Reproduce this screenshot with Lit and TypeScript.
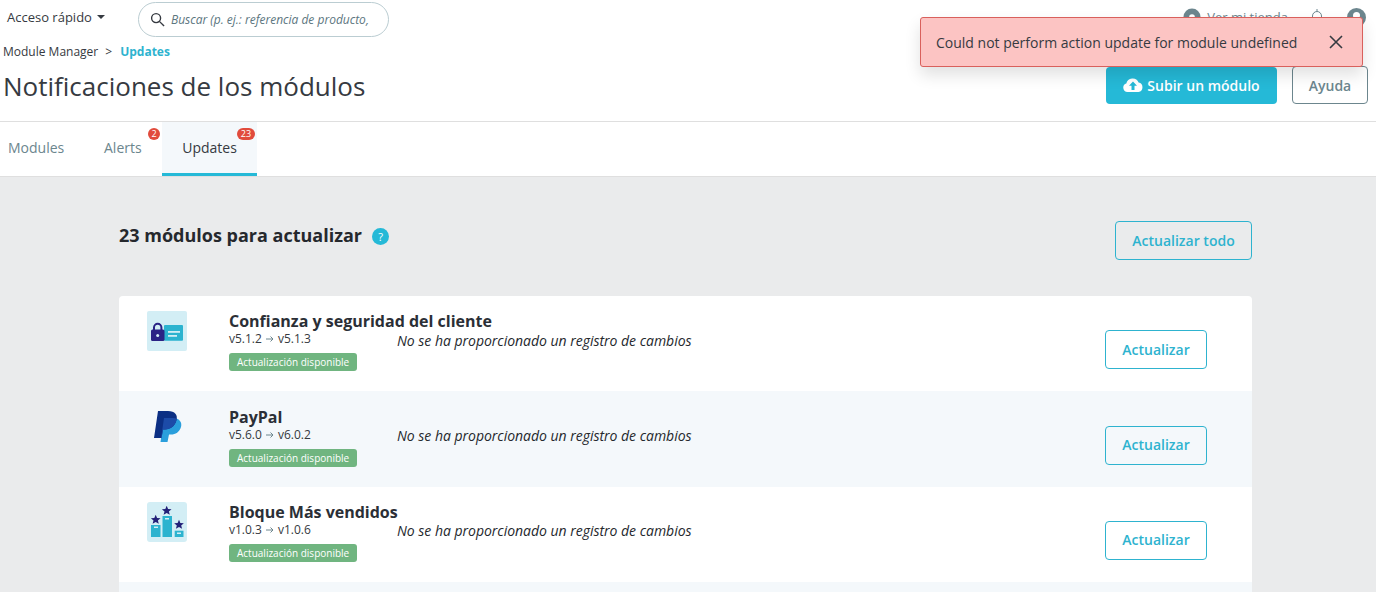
import { LitElement, html, css, svg } from "lit";
import { customElement } from "lit/decorators.js";

const lockIcon = html`<svg width="40" height="40" viewBox="0 0 40 40"><rect width="40" height="40" rx="2" fill="#d3eef5"/><rect x="17" y="14" width="19" height="15.700" rx="1" fill="#2cb3cf"/><rect x="21" y="20" width="12" height="1.800" fill="#d3eef5"/><rect x="21" y="24" width="9" height="1.800" fill="#d3eef5"/><path d="M7 19v-2.500a3.700 3.700 0 0 1 7.400 0v2.500" fill="none" stroke="#2a2385" stroke-width="2"/><rect x="4" y="18.500" width="13.500" height="11.500" rx="1.500" fill="#2a2385"/><circle cx="10.700" cy="24.500" r="1.500" fill="#d3eef5"/></svg>`;
const ppDark = "M11 4H21C28 4 31 8 29.500 13 28 19 23.500 22.500 18 22.500H16L14.500 31H7Z";
const ppLight = "M17 11H26C32 11 35.500 15 34 20 32.500 25 28.500 27.500 24 27.500H22L20.500 35H13.500Z";
const paypalIcon = html`<svg width="40" height="40" viewBox="0 0 40 40"><defs><clipPath id="pp"><path d=${ppDark}/></clipPath></defs><path d=${ppLight} fill="#2a9fdc"/><path d=${ppDark} fill="#0b2f84"/><path d=${ppLight} fill="#1c4ba8" clip-path="url(#pp)"/></svg>`;
const star = (x: number, y: number) => svg`<path transform="translate(${x} ${y}) scale(1.150)" d="M0-4.200 1.200-1.300 4.200-1.100 1.900.8 2.700 3.800 0 2.200-2.700 3.800-1.900.8-4.200-1.100-1.200-1.300z" fill="#232078"/>`;
const podiumIcon = html`<svg width="40" height="40" viewBox="0 0 40 40"><rect width="40" height="40" rx="3" fill="#d3eef5"/><rect x="4" y="23" width="9.500" height="12" fill="#2cb3cf"/><rect x="15.500" y="14" width="9.500" height="21" fill="#2cb3cf"/><rect x="27.700" y="28.700" width="8.800" height="6.300" fill="#2cb3cf"/><rect x="7" y="24.500" width="4" height="1.500" fill="#d3eef5"/><rect x="18" y="16" width="4" height="1.500" fill="#d3eef5"/><rect x="30" y="30.500" width="4" height="1.500" fill="#d3eef5"/>${star(8.700, 17.500)}${star(19.700, 8.500)}${star(32, 22.500)}</svg>`;

const rows = [
  { name: "Confianza y seguridad del cliente", from: "v5.1.2", to: "v5.1.3", icon: lockIcon },
  { name: "PayPal", from: "v5.6.0", to: "v6.0.2", icon: paypalIcon },
  { name: "Bloque Más vendidos", from: "v1.0.3", to: "v1.0.6", icon: podiumIcon },
];

@customElement("app-root")
export class AppRoot extends LitElement {
  static styles = css`
    :host { display: block; height: 592px; overflow: hidden; position: relative; font-family: "Open Sans", sans-serif; background: #fff; color: #363a41; }
    .head { height: 121px; border-bottom: 1px solid #dfdfdf; box-sizing: content-box; background: #fff; }
    .top { display: flex; align-items: center; height: 35px; padding: 2px 10px 0 7px; }
    .quick { font-size: 13px; color: #363a41; width: 131px; display: flex; align-items: center; gap: 5px; padding-bottom: 5px; }
    .caret { width: 0; height: 0; border: 4px solid transparent; border-top-color: #363a41; border-bottom: 0; }
    .search { box-sizing: border-box; width: 251px; height: 35px; border: 1px solid #bbcdd2; border-radius: 18px; display: flex; align-items: center; gap: 6px; padding-left: 11px; font-size: 12px; font-style: italic; color: #5c7680; white-space: nowrap; overflow: hidden; }
    .right { margin-left: auto; display: flex; align-items: center; color: #6c868e; font-size: 13px; padding-bottom: 5px; }
    .shop { display: flex; align-items: center; gap: 6px; margin-right: 22px; }
    .bell { margin-right: 23px; display: flex; }
    .crumb { font-size: 12px; padding: 6px 0 0 3px; height: 17px; line-height: 17px; display: flex; gap: 7px; color: #363a41; }
    .crumb b { color: #2eb3cf; font-weight: 700; margin-left: 1px; }
    .titlebar { display: flex; align-items: center; padding: 0 8px 0 3px; height: 40px; margin-top: 6px; }
    h1 { margin: 0; font-size: 26px; font-weight: 400; line-height: 36px; color: #363a41; flex: 1; }
    .btn { box-sizing: border-box; font-family: inherit; font-size: 14px; font-weight: 600; border-radius: 4px; display: flex; align-items: center; justify-content: center; background: transparent; padding: 0; }
    .primary { width: 171px; height: 37px; background: #25b9d7; border: 0; color: #fff; gap: 4px; margin-right: 15px; margin-top: -2px; }
    .help { width: 76px; height: 38px; border: 1px solid #6c868e; color: #6c868e; background: #fff; margin-top: -2px; }
    .outline { border: 1px solid #2eb3cf; color: #2eb3cf; }
    .tabs { display: flex; height: 54px; border-bottom: 1px solid #dfdfdf; }
    .tab { position: relative; font-size: 14px; color: #6c868e; display: flex; align-items: center; box-sizing: border-box; height: 54px; padding-bottom: 4px; }
    .tab.t1 { padding-left: 8px; width: 104px; }
    .tab.t2 { width: 58px; }
    .tab.on { width: 95px; justify-content: center; background: #f4f8fb; color: #363a41; border-bottom: 3px solid #25b9d7; padding-bottom: 1px; }
    .badge { position: absolute; top: 6px; height: 12px; background: #e14b3c; color: #fff; font-size: 9px; line-height: 12px; border-radius: 6px; text-align: center; }
    .b2 { left: 44px; width: 12px; }
    .b23 { left: 75px; width: 18px; }
    .main { background: #eaebec; padding: 44px 124px 0 119px; height: 500px; }
    .sechead { display: flex; align-items: flex-start; height: 75px; }
    h2 { margin: 0; font-size: 18px; font-weight: 700; color: #25282d; line-height: 28px; }
    .q { width: 17px; height: 17px; border-radius: 50%; background: #25b9d7; color: #fff; font-size: 11px; line-height: 17px; text-align: center; margin: 7px 0 0 10px; }
    .all { margin-left: auto; width: 137px; height: 39px; }
    .card { background: #fff; border-radius: 4px; overflow: hidden; }
    .row { display: grid; grid-template-columns: 82px 168px 1fr 102px; height: 95.330px; box-sizing: border-box; padding: 15.200px 45px 0 28px; }
    .row:nth-child(even) { background: #f4f8fb; }
    .ico { width: 40px; height: 40px; }
    .info { display: flex; flex-direction: column; align-items: flex-start; }
    .name { font-size: 16px; font-weight: 700; line-height: 20px; white-space: nowrap; color: #2b2f36; }
    .ver { font-size: 12px; line-height: 16px; display: flex; align-items: center; gap: 3px; }
    .ok { background: #70b580; color: #fff; font-size: 10px; line-height: 18px; height: 18px; padding: 0 8px; border-radius: 3px; margin-top: 6px; white-space: nowrap; }
    .log { font-size: 14px; font-style: italic; color: #25282d; padding-top: 19.600px; line-height: 19px; letter-spacing: -0.020px; }
    .up { width: 102px; height: 39px; margin-top: 19.100px; padding-bottom: 1px; }
    .toast { position: absolute; left: 920px; top: 17px; width: 443px; height: 50px; box-sizing: border-box; background: #fcc4c3; border: 1px solid #d9605c; border-radius: 3px; box-shadow: 0 8px 16px rgba(0,0,0,.12); display: flex; align-items: center; padding: 0 19px 0 15px; font-size: 14px; color: #363a41; }
    .x { margin-left: auto; display: flex; }
  `;

  render() {
    return html`
      <div class="head">
        <div class="top">
          <div class="quick">Acceso rápido <span class="caret"></span></div>
          <div class="search">
            <svg width="15" height="15" viewBox="0 0 16 16" fill="none" stroke="#363a41" stroke-width="1.500"><circle cx="6.500" cy="6.500" r="4.800"/><path d="M10 10l5 5"/></svg>
            Buscar (p. ej.: referencia de producto,
          </div>
          <div class="right">
            <div class="shop"><svg width="18" height="18" viewBox="0 0 19 19"><circle cx="9.500" cy="9.500" r="9" fill="#6c868e"/><circle cx="9.500" cy="9.500" r="3" fill="#fff"/></svg>Ver mi tienda</div>
            <div class="bell"><svg width="14" height="18" viewBox="0 0 14 18" fill="none" stroke="#6c868e" stroke-width="1"><path d="M7 1v2M2.500 13V8a4.500 4.500 0 0 1 9 0v5l1.500 1.500H1z"/></svg></div>
            <svg width="19" height="19" viewBox="0 0 19 19"><circle cx="9.500" cy="9.500" r="9.500" fill="#6c868e"/><circle cx="9.500" cy="7.500" r="3.500" fill="#fff"/></svg>
          </div>
        </div>
        <div class="crumb"><span>Module Manager</span><span>&gt;</span><b>Updates</b></div>
        <div class="titlebar">
          <h1>Notificaciones de los módulos</h1>
          <button class="btn primary">
            <svg width="20" height="14" viewBox="0 0 20 14"><path d="M4.500 14a4.300 4.300 0 0 1-1.200-8.400A6.500 6.500 0 0 1 15.600 4.400 4.900 4.900 0 0 1 15.500 14z" fill="#fff"/><path d="M10 3.500l4 4.300h-2.500V12h-3V7.800H6z" fill="#25b9d7"/></svg>
            Subir un módulo
          </button>
          <button class="btn help">Ayuda</button>
        </div>
      </div>
      <div class="tabs">
        <div class="tab t1">Modules</div>
        <div class="tab t2">Alerts<span class="badge b2">2</span></div>
        <div class="tab on">Updates<span class="badge b23">23</span></div>
      </div>
      <div class="main">
        <div class="sechead">
          <h2>23 módulos para actualizar</h2>
          <div class="q">?</div>
          <button class="btn outline all">Actualizar todo</button>
        </div>
        <div class="card">
          ${rows.map(r => html`
            <div class="row">
              <div class="ico">${r.icon}</div>
              <div class="info">
                <div class="name">${r.name}</div>
                <div class="ver">${r.from} <svg width="10" height="8" viewBox="0 0 10 8" fill="none" stroke="#6c868e"><path d="M1 4h7M5.500 1.500 8 4 5.500 6.500"/></svg> ${r.to}</div>
                <div class="ok">Actualización disponible</div>
              </div>
              <div class="log">No se ha proporcionado un registro de cambios</div>
              <button class="btn outline up">Actualizar</button>
            </div>`)}
          <div class="row"></div>
        </div>
      </div>
      <div class="toast">
        Could not perform action update for module undefined
        <span class="x"><svg width="14" height="14" viewBox="0 0 14 14" stroke="#363a41" stroke-width="1.600"><path d="M1 1l12 12M13 1 1 13"/></svg></span>
      </div>
    `;
  }
}
